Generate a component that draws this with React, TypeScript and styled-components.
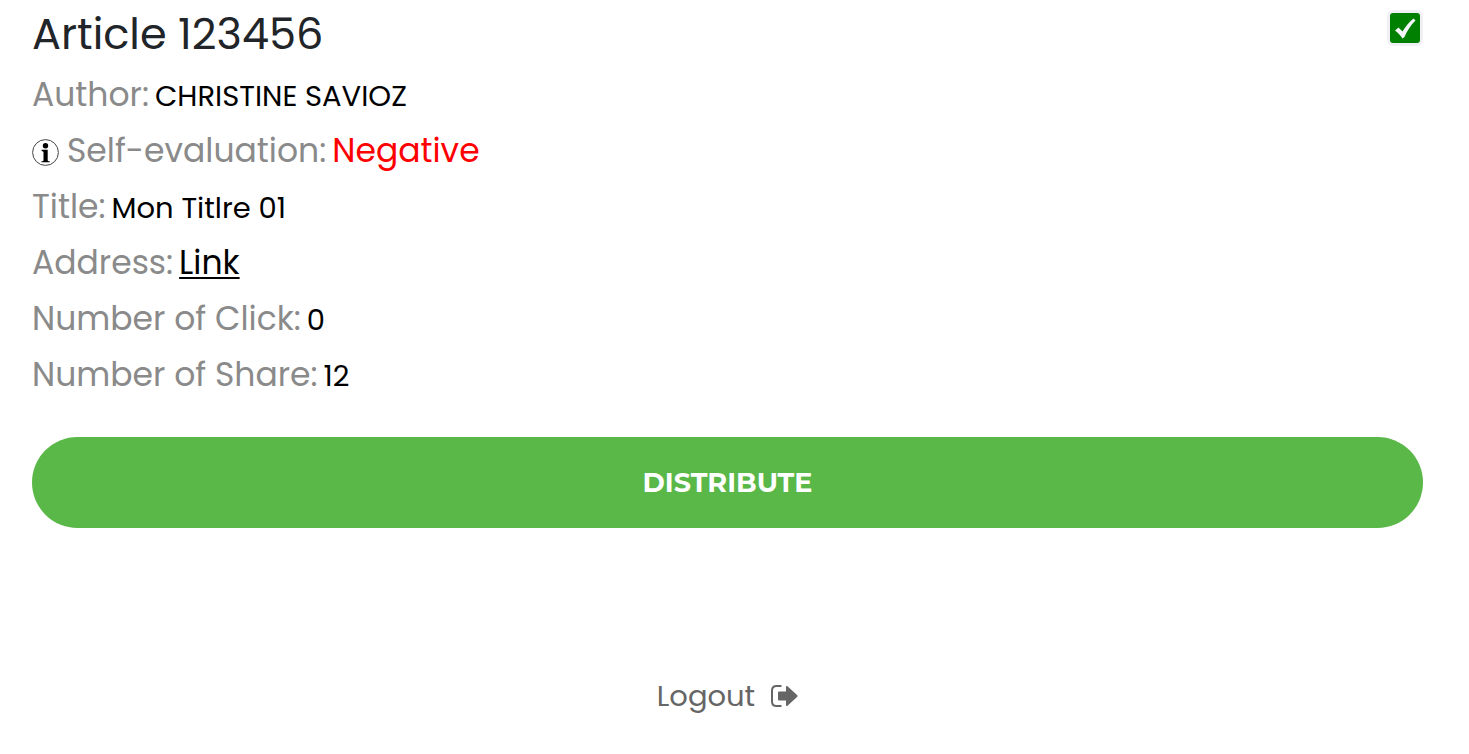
import React, { useState } from "react";
import styled, { createGlobalStyle } from "styled-components";

const GlobalStyle = createGlobalStyle`
  *, *::before, *::after { box-sizing: border-box; }
  body {
    margin: 0;
    background: #fff;
    color: #212529;
    font-family: Poppins, Inter, "Open Sans", sans-serif;
  }
`;

const Page = styled.main`
  padding: 8px 46px 32px 32px;
`;

const Header = styled.header`
  display: flex;
  justify-content: space-between;
  align-items: flex-start;
`;

const Heading = styled.h1`
  margin: 0;
  font-size: 43px;
  font-weight: 400;
  line-height: 52px;
`;

const CheckLabel = styled.label`
  display: grid;
  margin-top: 2px;
  cursor: pointer;
`;

const CheckInput = styled.input`
  grid-area: 1 / 1;
  appearance: none;
  width: 36px;
  height: 36px;
  margin: 0;
  border: 3px solid #f0f0f5;
  border-radius: 6px;
  background: #fff;
  &:checked { background: #008000; }
`;

const CheckMark = styled.svg`
  grid-area: 1 / 1;
  width: 36px;
  height: 36px;
  pointer-events: none;
`;

const Details = styled.dl`
  display: grid;
  gap: 8px;
  margin: 11px 0 0;
`;

const Row = styled.div`
  font-size: 33px;
  line-height: 48px;
`;

const Term = styled.dt`
  display: inline;
  margin-right: 6px;
  color: #8a8a8a;
  line-height: 1;
`;

const Value = styled.dd<{ $large?: boolean; $color?: string }>`
  display: inline;
  margin: 0;
  color: ${(p) => p.$color ?? "#000"};
  font-size: ${(p) => (p.$large ? 33 : 29)}px;
  line-height: 1;
`;

const AddressLink = styled.a`
  color: #000;
  text-decoration: underline;
  text-decoration-thickness: 2px;
  text-underline-offset: 3px;
`;

const InfoIcon = styled.svg`
  width: 27px;
  height: 27px;
  margin-right: 8px;
  vertical-align: -4px;
`;

const DistributeButton = styled.button`
  display: block;
  width: 100%;
  margin-top: 38px;
  padding: 28px 24px;
  border: 0;
  border-radius: 48px;
  background: #59b847;
  color: #fff;
  font-family: Montserrat, Inter, sans-serif;
  font-size: 27px;
  font-weight: 700;
  line-height: 35px;
  cursor: pointer;
`;

const Footer = styled.footer`
  display: flex;
  justify-content: center;
  margin-top: 144px;
`;

const LogoutButton = styled.button`
  display: flex;
  align-items: center;
  gap: 16px;
  padding: 0;
  border: 0;
  background: none;
  color: #666;
  font-family: inherit;
  font-size: 29px;
  line-height: 48px;
  cursor: pointer;
`;

const LogoutIcon = styled.svg`
  width: 27px;
  height: 22px;
`;

export default function App() {
  const [selected, setSelected] = useState(true);

  return (
    <>
      <GlobalStyle />
      <Page>
        <Header>
          <Heading>Article 123456</Heading>
          <CheckLabel>
            <CheckInput
              type="checkbox"
              aria-label="Select article"
              checked={selected}
              onChange={(e) => setSelected(e.target.checked)}
            />
            {selected && (
              <CheckMark viewBox="0 0 36 36" aria-hidden="true">
                <path
                  d="M8 20.500 L11.500 17.500 L15.500 21.500 C18.500 16.500 21.500 12.500 26.500 8.500 L28.500 10.500 C23.500 15.500 20 21 17.500 27 L15.500 28.500 C13.500 25.500 11 22.500 8 20.500 Z"
                  fill="#f4f5f8"
                />
              </CheckMark>
            )}
          </CheckLabel>
        </Header>

        <Details>
          <Row>
            <Term>Author:</Term>
            <Value>CHRISTINE SAVIOZ</Value>
          </Row>
          <Row>
            <Term>
              <InfoIcon viewBox="0 0 27 27" aria-hidden="true">
                <circle cx="13.5" cy="13.5" r="12.9" fill="#fff" stroke="#444" strokeWidth="1" />
                <circle cx="13.5" cy="6.7" r="2.7" fill="#000" />
                <path d="M9.600 10.800h6.100v10.400c0 .7.6 1 2 1.100v1H9.400v-1c1.500-.1 2.100-.4 2.100-1.100v-8c0-.8-.5-1.200-1.900-1.300z" fill="#000" />
              </InfoIcon>
              Self-evaluation:
            </Term>
            <Value $large $color="#f00">Negative</Value>
          </Row>
          <Row>
            <Term>Title:</Term>
            <Value>Mon Titlre 01</Value>
          </Row>
          <Row>
            <Term>Address:</Term>
            <Value $large>
              <AddressLink href="#">Link</AddressLink>
            </Value>
          </Row>
          <Row>
            <Term>Number of Click:</Term>
            <Value>0</Value>
          </Row>
          <Row>
            <Term>Number of Share:</Term>
            <Value>12</Value>
          </Row>
        </Details>

        <DistributeButton type="button">DISTRIBUTE</DistributeButton>

        <Footer>
          <LogoutButton type="button">
            Logout
            <LogoutIcon viewBox="0 0 27 22" aria-hidden="true">
              <path d="M10.500 1H5.500Q1 1 1 5.500V16.500Q1 21 5.500 21H10.500" fill="none" stroke="#666" strokeWidth="2" />
              <path d="M7 7.500Q7 6.500 8 6.500H15V2Q15 .3 16.500 1.300L26.300 10.200Q27 11 26.300 11.800L16.500 20.700Q15 21.700 15 20V15.500H8Q7 15.500 7 14.500Z" fill="#666" />
            </LogoutIcon>
          </LogoutButton>
        </Footer>
      </Page>
    </>
  );
}
